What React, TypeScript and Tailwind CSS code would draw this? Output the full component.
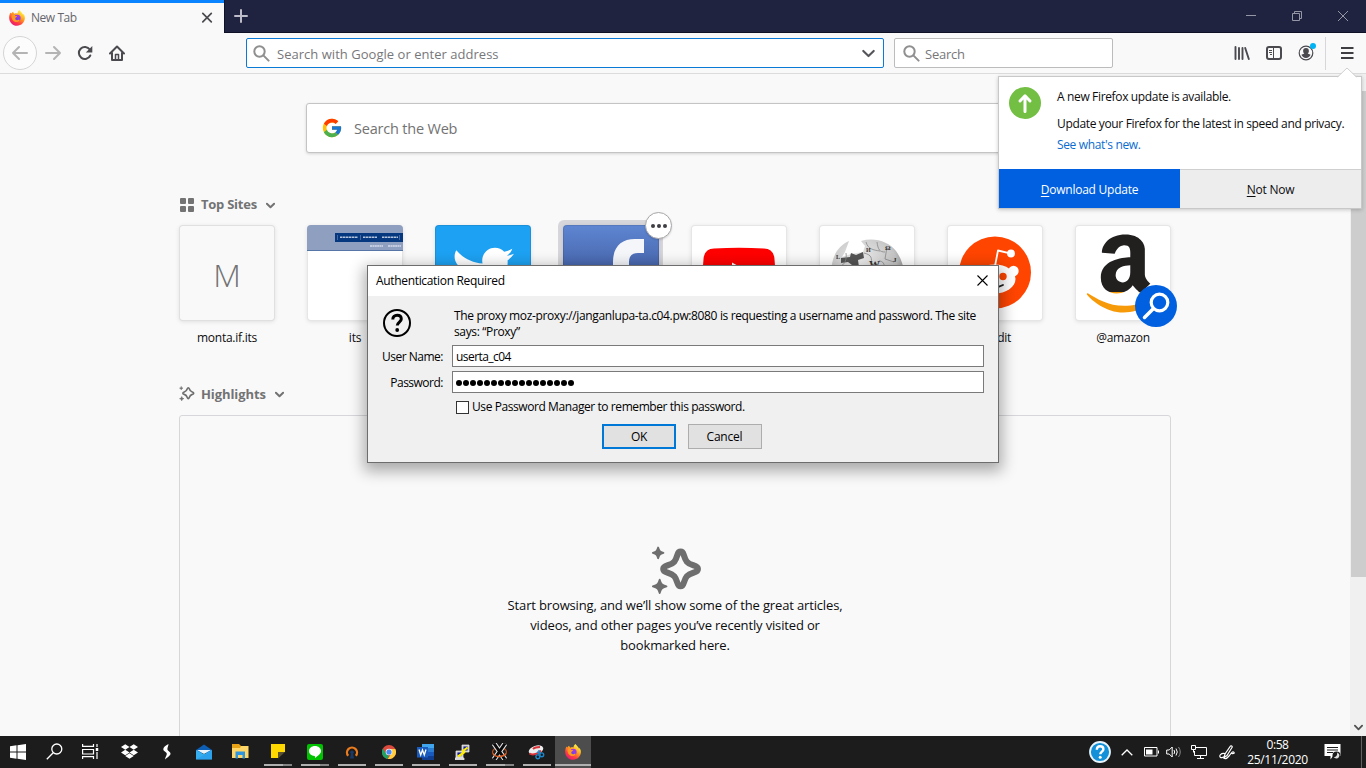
import React from "react";
import { FaTwitter, FaAmazon, FaDropbox } from "react-icons/fa";
import { FcGoogle } from "react-icons/fc";

function Firefox({ id }: { id: string }) {
  return (
    <svg width="16" height="16" viewBox="0 0 16 16">
      <defs>
        <linearGradient id={id + "a"} x1="0.85" y1="0" x2="0.2" y2="1">
          <stop offset="0.1" stopColor="#fff14a" />
          <stop offset="0.4" stopColor="#ffa41e" />
          <stop offset="0.7" stopColor="#ff4040" />
          <stop offset="1" stopColor="#e6127f" />
        </linearGradient>
        <linearGradient id={id + "b"} x1="0.8" y1="0" x2="0.2" y2="1">
          <stop offset="0" stopColor="#b634e8" />
          <stop offset="1" stopColor="#5a4be0" />
        </linearGradient>
      </defs>
      <path
        fill={`url(#${id}a)`}
        d="M15.4 5.6c-.3-.9-1-1.8-1.7-2.2.2.5.3.9.4 1.3C13 2.400 11.500 1.800 10.400.100 9.200.8 8.600 2.200 8.500 3.400 7.500 3.100 6.300 3.200 5.300 3.700 4.700 3.200 4.300 2.300 4.100 1.800 3.300 2.200 2.700 2.900 2.400 3.400 1.900 3.100 1.600 2.800 1.500 2.400.5 4.200.1 5.900.2 8c0 4.300 3.500 7.800 7.800 7.800s7.800-3.400 7.900-7.700c0-.9-.1-1.700-.5-2.500z"
      />
      <circle cx="8.300" cy="8" r="3.300" fill={`url(#${id}b)`} />
      <path fill="#ff9a1f" d="M2.700 5.200c1-.8 2.100-.8 2.800-.3.500 1.200 1.600 1.100 2.800 1.200-.2.800-1.400 1.100-1.900 1.900C5.700 9.500 7.400 10.800 9 10c.9-.5 1.600-.5 1.900.1-1 1.900-3.500 2.600-5.500 1.500C3.100 10.300 2.200 7.700 2.700 5.200z" />
    </svg>
  );
}

function Chevron({ w = 8, sw = 2, color = "#737373" }: { w?: number; sw?: number; color?: string }) {
  return (
    <svg width={w} height={w} viewBox="0 0 10 10" fill="none" stroke={color} strokeWidth={sw} strokeLinecap="round" strokeLinejoin="round">
      <path d="M1 3l4 4 4-4" />
    </svg>
  );
}

function Magnifier() {
  return (
    <svg width="17" height="17" viewBox="0 0 17 17" fill="none" stroke="#8f8f90" strokeWidth="2" strokeLinecap="round">
      <circle cx="6.500" cy="6.500" r="5.200" />
      <path d="M10.600 10.600l5 5" />
    </svg>
  );
}

function Sparkle({ size, stroke = 5 }: { size: number; stroke?: number }) {
  return (
    <svg width={size} height={size} viewBox="0 0 50 50">
      <path
        d="M29 5.500c1.800 0 2.500 1.200 3.100 3.200 1.800 6 3.200 8.400 9.400 10.200 3 .9 4.500 1.700 4.500 3.600s-1.500 2.900-4.500 3.700c-6.200 1.800-7.600 4-9.400 10-.6 2-1.300 3.300-3.100 3.300s-2.500-1.300-3.100-3.300c-1.800-6-3.200-8.200-9.400-10-3-.8-4.500-1.800-4.500-3.700s1.500-2.700 4.500-3.600c6.200-1.800 7.600-4.200 9.400-10.200.6-2 1.300-3.200 3.100-3.200z"
        fill="none"
        stroke="#6e6e6e"
        strokeWidth={stroke}
      />
      <path fill="#6e6e6e" stroke="#6e6e6e" strokeWidth="1.800" strokeLinejoin="round" d="M7 1.500c1 3.500 1.700 4.200 5.200 5.200C8.700 7.700 8 8.400 7 12c-1-3.600-1.700-4.300-5.200-5.300C5.300 5.700 6 5 7 1.500zM8.500 33c1.200 4.300 2 5.200 6.700 6.500-4.700 1.300-5.500 2.200-6.700 6.700-1.200-4.500-2-5.400-6.700-6.700 4.700-1.300 5.500-2.200 6.700-6.500z" />
    </svg>
  );
}

function TabBar() {
  return (
    <div className="flex h-[33px] shrink-0 bg-[#202340]">
      <div className="flex w-[224px] items-center border-t-[3px] border-[#0a84ff] bg-[#f9f9fa] pr-[11px] pl-[9px]">
        <Firefox id="ft" />
        <span className="ml-[6px] grow text-[12px] tracking-[-0.45px] text-[#66666a]">New Tab</span>
        <svg width="12" height="12" viewBox="0 0 12 12" stroke="#4a4a4f" strokeWidth="1.700" strokeLinecap="round">
          <path d="M1.800 1.300l8.500 8.500M10.300 1.300l-8.500 8.500" />
        </svg>
      </div>
      <div className="flex grow items-center border-b border-l border-[#0f1126] pl-[9px]">
        <svg width="14" height="14" viewBox="0 0 14 14" stroke="#bcbdc8" strokeWidth="2" strokeLinecap="round">
          <path d="M7 1v12M1 7h12" />
        </svg>
        <div className="ml-auto flex items-center gap-[36px] pr-[18px]">
          <svg width="10" height="10" viewBox="0 0 10 10" stroke="#9596a6">
            <path d="M0 4.500h10" />
          </svg>
          <svg width="10" height="10" viewBox="0 0 10 10" stroke="#9596a6" fill="none">
            <path d="M.5 2.500h7v7h-7zM2.500 2.500v-2h7v7h-2" />
          </svg>
          <svg width="10" height="10" viewBox="0 0 10 10" stroke="#9596a6">
            <path d="M0 0l10 10M10 0L0 10" />
          </svg>
        </div>
      </div>
    </div>
  );
}

function Toolbar() {
  return (
    <div className="flex h-[41px] shrink-0 items-center border-b border-[#dcdcdd] bg-[#f9f9fa] pl-[3px]">
      <div className="flex h-[34px] w-[34px] items-center justify-center rounded-full border border-[#d5d5d6] bg-[#fcfcfc]">
        <svg width="18" height="16" viewBox="0 0 18 16" fill="none" stroke="#b4b4b5" strokeWidth="2" strokeLinecap="round" strokeLinejoin="round">
          <path d="M16 8H2M8 2L2 8l6 6" />
        </svg>
      </div>
      <div className="flex w-[32px] justify-center">
        <svg width="18" height="16" viewBox="0 0 18 16" fill="none" stroke="#b4b4b5" strokeWidth="2" strokeLinecap="round" strokeLinejoin="round">
          <path d="M2 8h14M10 2l6 6-6 6" />
        </svg>
      </div>
      <div className="flex w-[32px] justify-center">
        <svg width="16" height="16" viewBox="0 0 16 16" fill="none" stroke="#4a4a4f" strokeWidth="2" strokeLinecap="round">
          <path d="M13.300 10.500A6 6 0 1 1 12.800 4.500" />
          <path d="M15.300 1v6.500H8.800z" fill="#4a4a4f" stroke="none" />
        </svg>
      </div>
      <div className="flex w-[32px] justify-center">
        <svg width="16" height="16" viewBox="0 0 16 16" fill="none" stroke="#4a4a4f" strokeWidth="2" strokeLinecap="round" strokeLinejoin="round">
          <path d="M1 8.500L8 1.500l7 7M3 8v7h10V8" />
          <path d="M6.500 15V9.500h3V15" strokeWidth="1.500" />
        </svg>
      </div>
      <div className="ml-[113px] flex h-[30px] w-[638px] items-center rounded-[2px] border border-[#0a7ad6] bg-white pr-[8px] pl-[6px]">
        <Magnifier />
        <span className="ml-[7px] grow pt-[3px] text-[13px] tracking-[0.03px] text-[#77777a]">Search with Google or enter address</span>
        <Chevron w={13} sw={1.6} color="#55555a" />
      </div>
      <div className="ml-[10px] flex h-[30px] w-[219px] items-center rounded-[2px] border border-[#bcbcbd] bg-white pl-[8px]">
        <Magnifier />
        <span className="ml-[5px] pt-[3px] text-[13px] tracking-[-0.25px] text-[#77777a]">Search</span>
      </div>
      <div className="ml-[113px] flex w-[32px] justify-center">
        <svg width="16" height="16" viewBox="0 0 16 16" fill="none" stroke="#4a4a4f" strokeWidth="2" strokeLinecap="round">
          <path d="M1.500 2v12M5 3v11M8.500 3v11" strokeWidth="1.900" />
          <path d="M11.200 3l3.600 11" strokeWidth="1.900" />
        </svg>
      </div>
      <div className="flex w-[32px] justify-center">
        <svg width="16" height="16" viewBox="0 0 16 16" fill="none" stroke="#4a4a4f">
          <rect x="1" y="2" width="14" height="12" rx="2" strokeWidth="2" />
          <path d="M7.500 2v12" />
          <path d="M3 5.500h3M3 7.500h3M4 9.500h2" />
        </svg>
      </div>
      <div className="relative flex w-[32px] justify-center">
        <svg width="16" height="16" viewBox="0 0 16 16">
          <circle cx="8" cy="8" r="6.800" fill="none" stroke="#4a4a4f" strokeWidth="1.200" />
          <path fill="#4a4a4f" d="M8 3a2.900 2.900 0 0 1 2.900 2.900c0 1-.5 2-1.200 2.500l2.900 1.400C11.800 11.800 10.200 13 8 13s-3.800-1.200-4.600-3.200l2.900-1.400A3 3 0 0 1 5.100 5.900 2.900 2.900 0 0 1 8 3z" />
        </svg>
        <span className="absolute -top-[2px] left-[20px] h-[6px] w-[6px] rounded-full bg-[#00b3f4]" />
      </div>
      <div className="ml-[3px] h-[33px] w-px bg-[#d7d7db]" />
      <div className="ml-[15px]">
        <svg width="13" height="12" viewBox="0 0 13 12" stroke="#3e3e43" strokeWidth="2">
          <path d="M0 1h12.500M0 6h12.500M0 11h12.500" />
        </svg>
      </div>
    </div>
  );
}

function Wikipedia() {
  return (
    <svg width="96" height="96" viewBox="0 0 96 96">
      <defs>
        <radialGradient id="wg" cx="0.4" cy="0.35" r="0.7">
          <stop offset="0" stopColor="#f1f1f1" />
          <stop offset="0.7" stopColor="#c4c4c4" />
          <stop offset="1" stopColor="#777" />
        </radialGradient>
      </defs>
      <path fill="url(#wg)" d="M12 50c0-16 5-28 18-34l-4 11-3 5 9-3 12-2 2-6-4-5c14-4 28 1 35 10 5 7 8 15 8 24 0 19-15 34-37 34S12 69 12 50z" />
      <path fill="#555" d="M22 33l9-1 1-4 5 2 7-3 1 6-6 2 1 7-7-2-4-3-7 1z" />
      <g fill="none" stroke="#888" strokeWidth=".8">
        <path d="M45 28c8 2 8 5 7 12M58 17c1 8 3 10 8 10M68 22l-2 12 9 3M20 42c6-2 8-8 7-14M60 36c4 0 6 3 5 8M47 17c2 7 7 8 14 9" />
      </g>
      <g fill="#333" fontFamily="Liberation Serif, serif" fontWeight="bold">
        <text x="50" y="43" fontSize="11">W</text>
        <text x="47" y="27" fontSize="6">И</text>
        <text x="66" y="25" fontSize="7">Ω</text>
        <text x="74" y="37" fontSize="7">J</text>
        <text x="17" y="34" fontSize="6">L</text>
      </g>
    </svg>
  );
}

function Tile({ label, children, className = "bg-white" }: { label: string; children?: React.ReactNode; className?: string }) {
  return (
    <div className="flex w-[96px] flex-col items-center">
      <div className={"flex h-[96px] w-[96px] items-center justify-center overflow-hidden rounded-[4px] shadow-[inset_0_0_0_1px_rgba(12,12,13,0.1),0_1px_4px_0_rgba(12,12,13,0.1)] " + className}>{children}</div>
      <span className="mt-[8px] text-[12px] leading-[18px] tracking-[-0.25px] text-[#0c0c0d]">{label}</span>
    </div>
  );
}

function TopSites() {
  return (
    <div className="mt-[9px] flex gap-[32px]">
      <Tile label="monta.if.its" className="bg-[#f9f9fa]">
        <span className="pt-[4px] text-[32px] font-light text-[#737373]">M</span>
      </Tile>
      <Tile label="its">
        <svg width="96" height="96" viewBox="0 0 96 96">
          <path fill="#8f9fc0" d="M0 0h96v25H0z" />
          <path fill="#5676a8" d="M0 25h96v1H0z" />
          <path fill="#05387f" d="M28 8h68v9H28z" />
          <path stroke="#b4c3dc" strokeWidth="1.600" strokeDasharray="2.500 .5" d="M33 12.300h18M56 12.300h14M75 12.300h16" />
          <path stroke="#4668a0" d="M30.500 10v5M53.500 10v5M92.500 10v5" />
          <path stroke="#d5dcea" strokeWidth="1.500" strokeDasharray="2 .4" d="M63 21h13M81 21h13" />
        </svg>
      </Tile>
      <Tile label="twitter" className="bg-[#1da1f2]">
        <FaTwitter size={62} color="#fff" />
      </Tile>
      <div className="relative">
        <div className="absolute -top-[5px] -left-[5px] h-[105px] w-[105px] rounded-[6px] bg-[#d7d7db]" />
        <div className="relative">
          <Tile label="facebook" className="bg-linear-to-b from-[#5f86d2] to-[#2c4080]">
            <svg width="96" height="96" viewBox="0 0 96 96">
              <path fill="#f4f6fa" d="M50 96V37C50 22 58 14 72 14H81V28H75C69 28 66 31 66 37V43H81L79 59H66V96zM38 43H51V59H38z" />
            </svg>
          </Tile>
        </div>
        <div className="absolute -top-[13px] left-[82px] flex h-[27px] w-[27px] items-center justify-center gap-[2px] rounded-full border border-[#a8a8aa] bg-white shadow-[0_1px_2px_rgba(0,0,0,0.15)]">
          <span className="h-[4px] w-[4px] rounded-full bg-[#3e3e43]" />
          <span className="h-[4px] w-[4px] rounded-full bg-[#3e3e43]" />
          <span className="h-[4px] w-[4px] rounded-full bg-[#3e3e43]" />
        </div>
      </div>
      <Tile label="youtube">
        <svg width="96" height="96" viewBox="0 0 96 96">
          <path fill="#f00" d="M23 23.500q25-1.500 50 0 10 .5 10.500 11 1.500 13.500 0 27-.5 10.500-10.500 11-25 1.500-50 0-10-.5-10.500-11-1.500-13.500 0-27 .5-10.500 10.500-11z" />
          <path fill="#fff" d="M41 37.500l19 10.500-19 10.500z" />
        </svg>
      </Tile>
      <Tile label="wikipedia">
        <Wikipedia />
      </Tile>
      <Tile label="reddit">
        <svg width="96" height="96" viewBox="0 0 96 96">
          <circle cx="48" cy="47.500" r="36" fill="#ff4500" />
          <circle cx="66.500" cy="46" r="5.200" fill="#fff" />
          <circle cx="29.500" cy="46" r="5.200" fill="#fff" />
          <ellipse cx="47.500" cy="54" rx="21" ry="14.500" fill="#fff" />
          <path d="M48 41l3-15.500 12 2.800" fill="none" stroke="#fff" strokeWidth="1.800" strokeLinejoin="round" />
          <circle cx="64" cy="28.500" r="3.900" fill="#fff" />
          <circle cx="56" cy="51.500" r="3.700" fill="#ff4500" />
          <circle cx="40" cy="51.500" r="3.700" fill="#ff4500" />
          <path d="M40 60q8 4.500 16 0" fill="none" stroke="#222" strokeWidth="1.800" strokeLinecap="round" />
        </svg>
      </Tile>
      <div className="relative">
        <Tile label="@amazon">
          <svg width="0" height="0" className="absolute">
            <defs>
              <linearGradient id="az" gradientUnits="userSpaceOnUse" x1="0" y1="32" x2="0" y2="480">
                <stop offset="0.735" stopColor="#221f1f" />
                <stop offset="0.735" stopColor="#f79a0a" />
              </linearGradient>
            </defs>
          </svg>
          <div className="pl-[2px]">
            <FaAmazon size={89} fill="url(#az)" />
          </div>
        </Tile>
        <div className="absolute top-[60px] left-[60px] h-[42px] w-[42px] rounded-full bg-[#0060df]">
          <svg width="42" height="42" viewBox="0 0 42 42" fill="none" stroke="#fff" strokeLinecap="round">
            <circle cx="24.500" cy="17.500" r="8.300" strokeWidth="3.200" />
            <path d="M18 24L9.500 32.500" strokeWidth="3.500" />
          </svg>
        </div>
      </div>
    </div>
  );
}

function NewTabPage() {
  return (
    <div className="flex min-h-0 grow bg-[#f9f9fa]">
      <div className="flex grow flex-col items-center">
        <div className="mt-[29px] flex h-[50px] w-[738px] shrink-0 items-center rounded-[3px] border border-[#c4c4c5] bg-white pl-[14px] shadow-[0_1px_3px_rgba(0,0,0,0.15)]">
          <FcGoogle size={22} />
          <span className="ml-[11px] pt-px text-[14.5px] tracking-[-0.2px] text-[#737373]">Search the Web</span>
        </div>
        <div className="mt-[41px] flex w-[992px] flex-col">
          <div className="flex h-[22px] items-center">
            <svg width="15" height="14" viewBox="0 0 15 14" fill="#737373">
              <rect x="1" width="6" height="6" rx="1" />
              <rect x="9" width="6" height="6" rx="1" />
              <rect x="1" y="8" width="6" height="6" rx="1" />
              <rect x="9" y="8" width="6" height="6" rx="1" />
            </svg>
            <span className="mr-[9px] ml-[7px] text-[13px] font-bold tracking-[-0.25px] text-[#737373]">Top Sites</span>
            <Chevron w={9} sw={2.2} />
          </div>
          <TopSites />
          <div className="mt-[36px] flex h-[22px] items-center">
            <Sparkle size={16} />
            <span className="mr-[9px] ml-[6px] pt-px text-[13px] font-bold tracking-[-0.08px] text-[#737373]">Highlights</span>
            <Chevron w={9} sw={2.2} />
          </div>
          <div className="mt-[10px] flex h-[330px] flex-col items-center rounded-[3px] border border-[#d7d7db] pt-[130px]">
            <div className="h-[49px] pl-[2px]">
              <Sparkle size={51} stroke={6} />
            </div>
            <p className="w-[350px] text-center text-[13px] leading-[20px] tracking-[-0.15px] text-[#0c0c0d]">
              Start browsing, and we’ll show some of the great articles,
              <br />
              videos, and other pages you’ve recently visited or
              <br />
              bookmarked here.
            </p>
          </div>
        </div>
      </div>
      <div className="flex w-[16px] shrink-0 flex-col items-center justify-between bg-[#f0f0f0] pt-[17px] pb-[4px]">
        <div className="h-[486px] w-[15px] bg-[#cdcdcd]" />
        <Chevron w={9} sw={2} color="#505050" />
      </div>
    </div>
  );
}

function UpdatePopup() {
  return (
    <div className="absolute top-[76px] left-[998px] flex h-[133px] w-[364px] flex-col border border-[#c8c8c9] bg-white shadow-[0_1px_4px_rgba(0,0,0,0.2)]">
      <svg width="20" height="11" viewBox="0 0 20 11" className="absolute -top-[10px] left-[338px]">
        <path d="M0 11L10 1l10 10z" fill="#fff" />
        <path d="M.5 10L10 1l9.500 9" fill="none" stroke="#d0d0d1" />
      </svg>
      <div className="flex grow pt-[10px] pl-[10px]">
        <svg width="32" height="32" viewBox="0 0 32 32">
          <circle cx="16" cy="16" r="16" fill="#73bf43" />
          <path d="M16 24.500V10M11 14l5-5.200 5 5.200" fill="none" stroke="#fff" strokeWidth="3" strokeLinecap="round" strokeLinejoin="round" />
        </svg>
        <div className="ml-[16px] flex flex-col text-[12px] leading-[20px] whitespace-nowrap tracking-[-0.35px] text-[#0c0c0d]">
          <span>A new Firefox update is available.</span>
          <span className="mt-[7px]">Update your Firefox for the latest in speed and privacy.</span>
          <span className="mt-px text-[#0a6cd0]">See what's new.</span>
        </div>
      </div>
      <div className="flex h-[39px] text-[12px] tracking-[-0.25px]">
        <div className="flex w-[181px] items-center justify-center bg-[#0060df] pt-[2px] text-white">
          <span><u className="underline-offset-2">D</u>ownload Update</span>
        </div>
        <div className="flex grow items-center justify-center border-t border-[#cfcfcf] bg-[#ededed] pt-px text-[#0c0c0d]">
          <span><u className="underline-offset-2">N</u>ot Now</span>
        </div>
      </div>
    </div>
  );
}

function AuthDialog() {
  return (
    <div className="absolute top-[265px] left-[367px] flex h-[198px] w-[632px] flex-col border border-[#6d6d6d] bg-[#f0f0f0] text-[12px] tracking-[-0.36px] text-black shadow-[0_5px_14px_3px_rgba(0,0,0,0.32)]">
      <div className="flex h-[30px] shrink-0 items-center justify-between bg-white pr-[10px] pl-[8px]">
        <span className="tracking-[-0.33px]">Authentication Required</span>
        <svg width="11" height="11" viewBox="0 0 11 11" stroke="#000" strokeWidth="1.100" className="mb-[2px]">
          <path d="M.5.5l10 10M10.500.5l-10 10" />
        </svg>
      </div>
      <div className="flex pt-[11px]">
        <div className="w-[86px] pt-[2px] pl-[15px]">
          <svg width="28" height="28" viewBox="0 0 28 28" fill="none" stroke="#000">
            <circle cx="14" cy="14" r="13" strokeWidth="2" />
            <path d="M9.800 10.500c0-2.800 1.800-4.300 4.300-4.300 2.600 0 4.200 1.500 4.200 3.800 0 3-4 3.200-4 6.500" strokeWidth="3" />
            <circle cx="14.200" cy="21" r="1.900" fill="#000" stroke="none" />
          </svg>
        </div>
        <p className="h-[32px] pt-px leading-[16px] whitespace-nowrap">
          The proxy moz-proxy://janganlupa-ta.c04.pw:8080 is requesting a username and password. The site
          <br />
          says: “Proxy”
        </p>
      </div>
      <div className="mt-[6px] flex h-[22px] items-center">
        <span className="w-[75px] pt-[2px] text-right tracking-[-0.5px]">User Name:</span>
        <div className="ml-[9px] flex h-[22px] w-[532px] items-center border border-[#7a7a7a] bg-white pt-[2px] pl-[3px] tracking-[-0.55px]">userta_c04</div>
      </div>
      <div className="mt-[4px] flex h-[22px] items-center">
        <span className="w-[75px] pt-[2px] text-right tracking-[-0.5px]">Password:</span>
        <div className="ml-[9px] flex h-[22px] w-[532px] items-center gap-px border border-[#7a7a7a] bg-white pl-[3px]">
          {Array.from({ length: 17 }, (_, i) => (
            <span key={i} className="mt-[2px] h-[6px] w-[6px] rounded-full bg-black" />
          ))}
        </div>
      </div>
      <div className="mt-[5px] flex h-[18px] items-center pl-[88px]">
        <span className="h-[13px] w-[13px] border border-[#333] bg-white" />
        <span className="ml-[3px] tracking-[-0.42px]">Use Password Manager to remember this password.</span>
      </div>
      <div className="mt-[8px] flex gap-[12px] pl-[234px]">
        <div className="flex h-[25px] w-[74px] items-center justify-center border-2 border-[#0078d7] bg-[#e1e1e1]">OK</div>
        <div className="flex h-[25px] w-[74px] items-center justify-center border border-[#adadad] bg-[#e1e1e1] pr-px tracking-[-0.2px]">Cancel</div>
      </div>
    </div>
  );
}

function Task({ children, run, active }: { children: React.ReactNode; run?: "one" | "many"; active?: boolean }) {
  return (
    <div className={"flex h-[32px] flex-col items-center " + (active ? "w-[36px] bg-[#4d4d4d]" : "w-[37px]")}>
      <div className="flex h-[28px] items-center pt-[3px]">{children}</div>
      {run && (
        <div className={"flex h-[2px] " + (active ? "w-[36px]" : "w-[28px]")}>
          <span className="grow bg-[#b0b0b0]" />
          {run === "many" && <span className="w-[9px] bg-[#858585]" />}
        </div>
      )}
    </div>
  );
}

function Taskbar() {
  return (
    <div className="flex h-[32px] shrink-0 items-start bg-[#1c1c1c] text-white">
      <div className="flex h-[31px] w-[36px] items-center justify-center">
        <svg width="16" height="16" viewBox="0 0 16 16" fill="#fff">
          <path d="M0 2.300L6.500 1.300V7.500H0zM7.500 1.200L16 0v7.500H7.500zM0 8.500h6.500v6.200L0 13.700zM7.500 8.500H16V16l-8.500-1.200z" />
        </svg>
      </div>
      <div className="flex h-[31px] w-[36px] items-center justify-center">
        <svg width="17" height="17" viewBox="0 0 17 17" fill="none" stroke="#fff" strokeWidth="1.300">
          <circle cx="10.800" cy="6" r="5" />
          <path d="M7.200 9.800L.8 16.200" />
        </svg>
      </div>
      <div className="flex h-[31px] w-[36px] items-center justify-center">
        <svg width="17" height="15" viewBox="0 0 17 15" fill="none" stroke="#fff" strokeWidth="1.200">
          <path d="M.6 0v2.400h10.900V0M.6 5.500h10.900v4.500H.6zM.6 15v-2.400h10.900V15M15 0v3M15 8v7" />
          <path d="M15 4v3" strokeWidth="2.500" />
        </svg>
      </div>
      <div className="ml-[3px] flex">
        <Task><FaDropbox size={17} /></Task>
        <Task>
          <svg width="10" height="16" viewBox="0 0 10 16" fill="#fff">
            <path d="M6.500 0C3.500 1.500 1 3.500 1.300 5.500 1.600 7.500 5 8 4.800 10 4.600 11.500 3.300 13 3 15.500 6 13 8.600 11.500 8.500 9.500 8.300 7.500 5.300 7 5.400 5 5.500 3.500 6.300 2 6.500 0z" />
          </svg>
        </Task>
        <Task>
          <svg width="16" height="16" viewBox="0 0 16 16">
            <path fill="#0d5fb5" d="M0 6l8-5.500L16 6v3H0z" />
            <path fill="#e8f3fa" d="M1 6h14L8 10z" />
            <path fill="#35aef0" d="M0 6l8 4.300 8-4.300v9.500H0z" />
            <path fill="#1c8fe0" d="M0 15.500l16-9v9z" opacity=".4" />
          </svg>
        </Task>
        <Task>
          <svg width="17" height="15" viewBox="0 0 17 15">
            <path fill="#e8a317" d="M0 0h7l2 2v2H0z" />
            <path fill="#ffd668" d="M0 4h8l1-2h7.500V14H0z" />
            <path fill="#2f95dc" d="M3.500 7.500H13V14.500h-2.500V11H6v3.500H3.500z" />
          </svg>
        </Task>
        <Task run="many">
          <svg width="14" height="15" viewBox="0 0 14 15">
            <path fill="#ffd800" d="M0 0h14v14H0z" />
            <path fill="#1c1c1c" d="M7 8h7v7H7z" />
            <path fill="#5a5230" d="M7 8h7l-7 6.500z" />
          </svg>
        </Task>
        <Task run="many">
          <svg width="16" height="16" viewBox="0 0 16 16">
            <rect width="16" height="16" rx="2" fill="#00c200" />
            <path fill="#fff" d="M8 2c3.400 0 6 2.200 6 5S11 11.800 8 14c.2-1 .1-1.900-.5-2C4.400 11.800 2 9.700 2 7s2.600-5 6-5z" />
          </svg>
        </Task>
        <Task run="one">
          <svg width="14" height="14" viewBox="0 0 14 14">
            <path d="M3.200 10.800A5 5 0 1 1 10.800 10.800" fill="none" stroke="#ea7b1e" strokeWidth="2.300" />
            <circle cx="7" cy="7.300" r="1.800" fill="#1a3967" />
            <path fill="#1a3967" d="M6 8h2l1 5.500H5z" />
          </svg>
        </Task>
        <Task run="one">
          <svg width="14" height="14" viewBox="0 0 14 14">
            <circle cx="7" cy="7" r="7" fill="#dd4b3e" />
            <path fill="#1da362" d="M.9 3.500L5 10l2 .5L5.500 13.900A7 7 0 0 1 .9 3.500z" />
            <path fill="#ffcd40" d="M7 4h6.300A7 7 0 0 1 5.700 13.900L9.500 8.500z" />
            <circle cx="7" cy="7" r="3.300" fill="#f3f3f3" />
            <circle cx="7" cy="7" r="2.600" fill="#4a8af4" />
          </svg>
        </Task>
        <Task run="one">
          <svg width="17" height="16" viewBox="0 0 17 16">
            <path fill="#41a5ee" d="M5 0h12v4H5z" />
            <path fill="#2b7cd3" d="M5 4h12v4H5z" />
            <path fill="#185abd" d="M5 8h12v4H5z" />
            <path fill="#103f91" d="M5 12h12v4H5z" />
            <path fill="#1a5cbe" d="M0 3h11v10.500H0z" />
            <path d="M2 5.500l1.700 5.500L5.500 6l1.800 5L9 5.500" fill="none" stroke="#fff" strokeWidth="1.300" />
          </svg>
        </Task>
        <Task run="one">
          <svg width="15" height="16" viewBox="0 0 15 16">
            <path fill="#c9c9c9" stroke="#eee" strokeWidth=".7" d="M7 1h7v7H7zM1 7h7v7H1zM0 14h9v2H0z" />
            <path fill="#101a9c" d="M8.500 2.500h4v4h-4zM2.500 8.500h4v3h-4z" />
            <path fill="none" stroke="#ffee00" strokeWidth="2.200" d="M12.500 3.500L8 7l1 1.500-6 4" />
          </svg>
        </Task>
        <Task run="many">
          <svg width="17" height="17" viewBox="0 0 17 17" fill="none">
            <ellipse cx="8.500" cy="9" rx="7" ry="4.500" stroke="#b8501f" strokeWidth="1.200" />
            <path stroke="#e4e4e4" strokeWidth="5" d="M3 .5l11 16M14 .5L3 16.500" />
            <path stroke="#0a0a0a" strokeWidth="3" d="M3 .5l11 16M14 .5L3 16.500" />
            <path stroke="#e0642a" strokeWidth="1.300" d="M2 10.500c2 4 10 4 13 0" />
          </svg>
        </Task>
        <Task run="one">
          <svg width="17" height="16" viewBox="0 0 17 16">
            <ellipse cx="8" cy="6" rx="7.500" ry="4.300" fill="#eee" transform="rotate(-18 8 6)" />
            <path fill="none" stroke="#d8343a" strokeWidth="2" d="M1.500 9.500c3 2 9 .5 11.500-3M5 5c2-2 5-2 7-2" />
            <circle cx="9.800" cy="12.800" r="1.900" fill="none" stroke="#1c86c9" strokeWidth="1.400" />
            <circle cx="13.800" cy="10.800" r="1.900" fill="none" stroke="#1c86c9" strokeWidth="1.400" />
            <path stroke="#1c86c9" strokeWidth="1.400" d="M11 11V6M12 9.500L9 8" />
          </svg>
        </Task>
        <Task run="one" active>
          <Firefox id="fb" />
        </Task>
      </div>
      <div className="ml-auto flex h-[32px] items-center">
        <div className="flex w-[27px] justify-center">
          <svg width="22" height="22" viewBox="0 0 22 22">
            <circle cx="11" cy="11" r="10" fill="#1290d8" stroke="#e9f5fc" strokeWidth="1.800" />
            <path d="M7.800 8.800c0-2.300 1.300-3.500 3.300-3.500s3.300 1.200 3.300 2.900c0 2.300-3.100 2.500-3.100 5" fill="none" stroke="#fff" strokeWidth="2.400" />
            <circle cx="11.200" cy="16.200" r="1.500" fill="#fff" />
          </svg>
        </div>
        <div className="flex w-[27px] justify-center">
          <svg width="12" height="7" viewBox="0 0 12 7" fill="none" stroke="#fff" strokeWidth="1.300">
            <path d="M.7 6.300L6 1l5.300 5.300" />
          </svg>
        </div>
        <div className="flex w-[22px] justify-center">
          <svg width="15" height="10" viewBox="0 0 15 10">
            <path fill="none" stroke="#fff" d="M.5.500h12.500v8.500H.5zM14.500 3.500v3" />
            <path fill="#fff" d="M2 2.500h6.500v5H2z" />
          </svg>
        </div>
        <div className="flex w-[24px] justify-center">
          <svg width="17" height="14" viewBox="0 0 17 14" fill="none" stroke="#fff">
            <path d="M.7 5v4h2.500l3 3V2l-3 3zM8 5q1.300 2 0 4M10 3.500q2.500 3.500 0 7" />
            <path d="M12.500 2q3.500 5 0 10" stroke="#8a8a8a" />
          </svg>
        </div>
        <div className="flex w-[26px] justify-center">
          <svg width="16" height="14" viewBox="0 0 16 14" fill="none" stroke="#fff">
            <path d="M5 2.500h10.500v8H3.500V6M9.500 10.500v3M6 13.500h7M.5.500h4v4h-4zM2.500 4.500v3" />
          </svg>
        </div>
        <div className="flex w-[29px] justify-center">
          <svg width="16" height="15" viewBox="0 0 16 15" fill="none" stroke="#fff" strokeWidth="1.200">
            <path d="M5 12.500L6 9l5.500-8q1.500-.5 1.800 1L8 10.500zM6 8.500C2 7.500-.5 11 1.500 12.500c2 1 3-1.500 3.500 0s2 2 5-1.500 3-5 4.500-4 .5 2-2 1.500" />
          </svg>
        </div>
        <div className="flex w-[73px] flex-col items-center text-[12px] leading-[15.500px] tracking-[-0.45px]">
          <span>0:58</span>
          <span className="tracking-[-0.3px]">25/11/2020</span>
        </div>
        <div className="flex w-[37px] justify-center">
          <svg width="17" height="16" viewBox="0 0 17 16">
            <path fill="#fff" d="M.5 0h16v12H9l-2.500 3.500V12h-6z" />
            <path stroke="#1c1c1c" strokeWidth="1.200" d="M3 3.500h11M3 6h11M3 8.500h6" />
            <circle cx="12.500" cy="11.500" r="4" fill="#1c1c1c" />
            <path fill="#ddd" d="M13 8.500a3 3 0 1 1-3.200 4.500c2 .5 4-1.500 3.200-4.500z" />
          </svg>
        </div>
        <div className="mr-[4px] ml-[10px] h-[32px] w-px bg-[#606060]" />
      </div>
    </div>
  );
}

export default function App() {
  return (
    <div className="relative flex h-[768px] w-[1366px] flex-col overflow-hidden bg-[#f9f9fa] font-['Segoe_UI','Open_Sans','Noto_Sans',sans-serif]">
      <TabBar />
      <Toolbar />
      <NewTabPage />
      <Taskbar />
      <UpdatePopup />
      <AuthDialog />
    </div>
  );
}
